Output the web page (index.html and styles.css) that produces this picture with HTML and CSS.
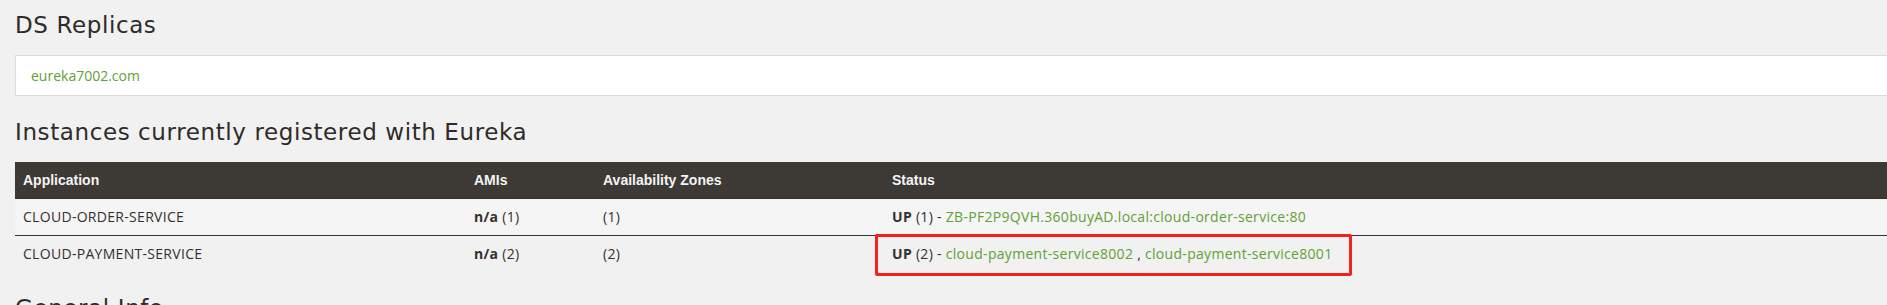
FILE: index.html
```html
<!DOCTYPE html>
<html lang="en">
<head>
  <meta charset="UTF-8" />
  <title>Eureka</title>
  <link rel="stylesheet" href="styles.css">
</head>
<body>
  <div class="page">
    <h2 class="section-title first">DS Replicas</h2>
    <ul class="replicas">
      <li class="replica"><a href="#">eureka7002.com</a></li>
    </ul>

    <h2 class="section-title">Instances currently registered with Eureka</h2>
    <table class="instances">
      <thead>
        <tr>
          <th class="col-app">Application</th>
          <th class="col-ami">AMIs</th>
          <th class="col-zone">Availability Zones</th>
          <th>Status</th>
        </tr>
      </thead>
      <tbody>
        <tr class="odd">
          <td>CLOUD-ORDER-SERVICE</td>
          <td><b>n/a</b> (1)</td>
          <td>(1)</td>
          <td><b>UP</b> (1) - <a href="#">ZB-PF2P9QVH.360buyAD.local:cloud-order-service:80</a></td>
        </tr>
        <tr>
          <td>CLOUD-PAYMENT-SERVICE</td>
          <td><b>n/a</b> (2)</td>
          <td>(2)</td>
          <td class="marked"><b>UP</b> (2) - <a href="#">cloud-payment-service8002</a> , <a href="#">cloud-payment-service8001</a><span class="mark"></span></td>
        </tr>
      </tbody>
    </table>

    <h2 class="section-title">General Info</h2>
  </div>
</body>
</html>
```

FILE: styles.css
```css
html, body {
  overflow: hidden;
}
body {
  margin: 0;
  background: #f1f1f1;
  font-family: 'Open Sans', sans-serif;
  font-size: 14px;
  line-height: 20px;
  color: #34302d;
}
a {
  color: #5fa134;
  text-decoration: none;
}
.page {
  width: 1920px;
  padding: 0 15px;
}
.section-title {
  font-family: 'DejaVu Sans', sans-serif;
  font-weight: normal;
  font-size: 23px;
  line-height: 26px;
  letter-spacing: 0.6px;
  color: #2f2b28;
  margin: 23px 0 17px;
}
.section-title.first {
  margin-top: 12px;
}
.replicas {
  list-style: none;
  margin: 0;
  padding: 0;
}
.replica {
  background: #fff;
  border: 1px solid #dcdcdc;
  padding: 10px 15px 9px;
  line-height: 20px;
}
.instances {
  width: 100%;
  border-collapse: collapse;
  table-layout: fixed;
}
.instances th {
  background: #3d3a35;
  color: #f4f4f4;
  font-family: 'Liberation Sans', sans-serif;
  font-weight: bold;
  text-align: left;
  padding: 8px;
  border-bottom: 1px solid #34302d;
}
.instances td {
  padding: 8px;
  text-align: left;
  letter-spacing: 0.3px;
}
.col-app { width: 435px; }
.col-ami { width: 113px; }
.col-zone { width: 273px; }
.instances tr.odd td {
  background: #f5f5f5;
  border-bottom: 1px solid #333;
}
.instances b {
  font-weight: bold;
}
.marked {
  position: relative;
}
.mark {
  position: absolute;
  left: -9px;
  top: -2px;
  width: 471px;
  height: 36px;
  border: 3px solid #f5221b;
  border-radius: 2px;
}
```
